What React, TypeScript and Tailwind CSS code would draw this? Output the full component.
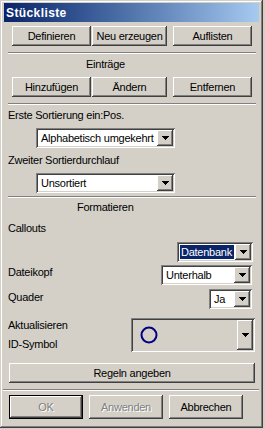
import React from "react";

const raised =
  "shadow-[inset_-1px_-1px_#404040,inset_1px_1px_#ffffff,inset_-2px_-2px_#808080,inset_2px_2px_#d4d0c8]";
const sunken =
  "shadow-[inset_1px_1px_#808080,inset_-1px_-1px_#ffffff,inset_2px_2px_#404040,inset_-2px_-2px_#d4d0c8]";

function Button({
  children,
  className = "",
  disabled = false,
  isDefault = false,
}: {
  children: React.ReactNode;
  className?: string;
  disabled?: boolean;
  isDefault?: boolean;
}) {
  const label = (
    <span
      className={
        disabled
          ? "text-[#808080] [text-shadow:1px_1px_0_#ffffff]"
          : "text-black"
      }
    >
      {children}
    </span>
  );
  if (isDefault) {
    return (
      <div className={`border border-black bg-[#d4d0c8] ${className}`}>
        <div className={`flex h-full items-center justify-center ${raised}`}>{label}</div>
      </div>
    );
  }
  return (
    <div className={`flex items-center justify-center bg-[#d4d0c8] ${raised} ${className}`}>
      {label}
    </div>
  );
}

function Arrow() {
  return (
    <svg width="7" height="4" viewBox="0 0 7 4" shapeRendering="crispEdges">
      <rect x="0" y="0" width="7" height="1" fill="#000" />
      <rect x="1" y="1" width="5" height="1" fill="#000" />
      <rect x="2" y="2" width="3" height="1" fill="#000" />
      <rect x="3" y="3" width="1" height="1" fill="#000" />
    </svg>
  );
}

function ArrowButton({ className = "" }: { className?: string }) {
  return (
    <div className={`flex w-[16px] shrink-0 items-center justify-center bg-[#d4d0c8] ${raised} ${className}`}>
      <Arrow />
    </div>
  );
}

function Combo({
  value,
  className = "",
  selected = false,
}: {
  value: string;
  className?: string;
  selected?: boolean;
}) {
  return (
    <div className={`flex h-[20px] bg-white p-[2px] ${sunken} ${className}`}>
      <div className="flex min-w-0 flex-1 p-[1px]">
        <div
          className={`flex flex-1 items-center overflow-hidden whitespace-nowrap ${
            selected ? "bg-[#0a246a] pl-[1px] text-white" : "pl-[2px] text-black"
          }`}
        >
          {value}
        </div>
      </div>
      <ArrowButton />
    </div>
  );
}

function Separator({ className = "" }: { className?: string }) {
  return <div className={`h-[2px] border-t border-b border-t-[#808080] border-b-white ${className}`} />;
}

function Label({ children, className = "" }: { children: React.ReactNode; className?: string }) {
  return <div className={`h-[14px] whitespace-nowrap leading-[14px] ${className}`}>{children}</div>;
}

export default function App() {
  return (
    <div className="h-[429px] w-[265px] bg-[#d4d0c8] font-['Liberation_Sans',Arial,sans-serif] text-[11px] tracking-[-0.25px] text-black">
      <div className="flex h-[428px] w-[263px] flex-col shadow-[inset_-1px_-1px_#404040,inset_1px_1px_#d4d0c8,inset_-2px_-2px_#808080,inset_2px_2px_#ffffff]">
        <div className="mx-[4px] mt-[3px] flex h-[19px] items-center bg-gradient-to-r from-[#0a246a] to-[#a6caf0] pl-[2px] text-[12px] font-bold tracking-[0.4px] text-white">
          Stückliste
        </div>

        <div className="mt-[4px] flex h-[20px] pl-[12px]">
          <Button className="w-[79px]">Definieren</Button>
          <Button className="ml-[1px] w-[75px]">Neu erzeugen</Button>
          <Button className="ml-[6px] w-[79px]">Auflisten</Button>
        </div>

        <Separator className="ml-[8px] mr-[7px] mt-[6px]" />
        <Label className="mt-[3px] pl-[86px]">Einträge</Label>

        <div className="mt-[6px] flex h-[20px] pl-[12px]">
          <Button className="w-[79px]">Hinzufügen</Button>
          <Button className="ml-[1px] w-[75px]">Ändern</Button>
          <Button className="ml-[6px] w-[79px]">Entfernen</Button>
        </div>

        <Separator className="ml-[8px] mr-[7px] mt-[6px]" />
        <Label className="mt-[3px] pl-[8px]">Erste Sortierung ein:Pos.</Label>
        <Combo className="ml-[36px] mt-[6px] w-[139px]" value="Alphabetisch umgekehrt" />
        <Label className="mt-[5px] pl-[8px]">Zweiter Sortierdurchlauf</Label>
        <Combo className="ml-[36px] mt-[6px] w-[139px]" value="Unsortiert" />

        <Separator className="ml-[8px] mr-[7px] mt-[3px]" />
        <Label className="mt-[2px] pl-[77px]">Formatieren</Label>
        <Label className="mt-[7px] pl-[8px]">Callouts</Label>
        <Combo className="ml-[177px] mt-[7px] w-[76px]" value="Datenbank" selected />

        <div className="mt-[3px] flex h-[20px] items-start pl-[8px] pr-[11px]">
          <Label>Dateikopf</Label>
          <Combo className="ml-auto w-[91px]" value="Unterhalb" />
        </div>

        <div className="mt-[4px] flex h-[20px] items-start pl-[8px] pr-[11px]">
          <Label className="mt-[1px]">Quader</Label>
          <Combo className="ml-auto w-[43px]" value="Ja" />
        </div>

        <div className="mt-[9px] flex h-[34px] pl-[8px] pr-[8px]">
          <div className="flex flex-col gap-[5px]">
            <Label>Aktualisieren</Label>
            <Label>ID-Symbol</Label>
          </div>
          <div className={`ml-auto flex w-[124px] bg-[#d4d0c8] p-[2px] ${sunken}`}>
            <div className="flex flex-1 items-center pl-[7px]">
              <svg width="18" height="18" viewBox="0 0 18 18">
                <circle cx="9" cy="9" r="7.5" fill="none" stroke="#000080" strokeWidth="2" />
              </svg>
            </div>
            <ArrowButton />
          </div>
        </div>

        <Button className="ml-[9px] mt-[11px] h-[20px] w-[246px]">Regeln angeben</Button>

        <Separator className="ml-[3px] mr-[4px] mt-[6px]" />

        <div className="mt-[4px] flex h-[24px] pl-[9px]">
          <Button className="w-[74px]" disabled isDefault>
            OK
          </Button>
          <Button className="ml-[6px] w-[74px]" disabled>
            Anwenden
          </Button>
          <Button className="ml-[6px] w-[74px]">Abbrechen</Button>
        </div>
      </div>
    </div>
  );
}
